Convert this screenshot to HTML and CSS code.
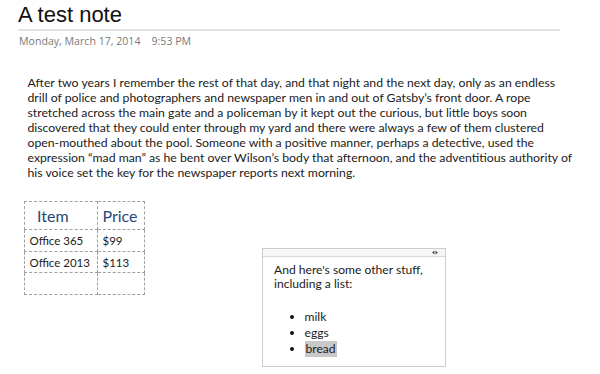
FILE: index.html
```html
<!DOCTYPE html>
<html lang="en">
<head>
<meta charset="utf-8">
<title>A test note</title>
<link rel="stylesheet" href="styles.css">
</head>
<body>
<div class="page">
  <header class="title-block">
    <h1 class="title">A test note</h1>
    <div class="meta"><span>Monday, March 17, 2014</span><span class="time">9:53 PM</span></div>
  </header>
  <p class="body-text">After two years I remember the rest of that day, and that night and the next day, only as an endless<br>drill of police and photographers and newspaper men in and out of Gatsby’s front door. A rope<br>stretched across the main gate and a policeman by it kept out the curious, but little boys soon<br>discovered that they could enter through my yard and there were always a few of them clustered<br>open-mouthed about the pool. Someone with a positive manner, perhaps a detective, used the<br>expression “mad man” as he bent over Wilson’s body that afternoon, and the adventitious authority of<br>his voice set the key for the newspaper reports next morning.</p>
  <div class="canvas-row">
    <table class="grid">
      <colgroup><col class="c1"><col class="c2"></colgroup>
      <tr class="head"><th class="th-item">Item</th><th>Price</th></tr>
      <tr class="r1"><td>Office 365</td><td>$99</td></tr>
      <tr class="r2"><td>Office 2013</td><td>$113</td></tr>
      <tr class="r3"><td></td><td></td></tr>
    </table>
    <div class="note-box">
      <div class="note-bar">
        <svg class="move" width="6" height="5" viewBox="0 0 6 5"><polygon points="0,2.5 2.5,0.5 2.5,4.5" fill="#555"/><polygon points="6,2.5 3.5,0.5 3.5,4.5" fill="#555"/></svg>
      </div>
      <div class="note-content">
        <p class="note-text">And here's some other stuff,<br>including a list:</p>
        <ul class="list">
          <li><span class="dot"></span><span>milk</span></li>
          <li><span class="dot"></span><span>eggs</span></li>
          <li><span class="dot"></span><span class="hl">bread</span></li>
        </ul>
      </div>
    </div>
  </div>
</div>
</body>
</html>
```
FILE: styles.css
```css
html, body {
  margin: 0;
  padding: 0;
  background: #ffffff;
}
body {
  font-family: Lato, "Open Sans", sans-serif;
  color: #1b1b1b;
}
.page {
  padding-left: 18px;
}
.title-block {
  width: 542px;
}
.title {
  margin: 0;
  padding-top: 1px;
  font-family: "Liberation Sans", Arial, sans-serif;
  font-weight: normal;
  font-size: 22px;
  line-height: 28px;
  color: #111;
  border-bottom: 2px solid #e2e2e2;
}
.meta {
  margin-top: 4px;
  font-family: "Open Sans", sans-serif;
  font-size: 10.6px;
  line-height: 12px;
  color: #7a7a7a;
  padding-left: 1px;
}
.time {
  margin-left: 11px;
}
.body-text {
  margin: 28px 0 0 9.5px;
  font-size: 12.25px;
  line-height: 15px;
  white-space: nowrap;
}
.canvas-row {
  display: flex;
  align-items: flex-start;
  margin-top: 21px;
}
.grid {
  margin-left: 6px;
  border-collapse: collapse;
  table-layout: fixed;
  width: 120px;
  font-size: 11.5px;
}
.grid .c1 { width: 73px; }
.grid .c2 { width: 47px; }
.grid th, .grid td {
  border: 1px dashed #a0a0a0;
  padding: 0 3px 0 4.5px;
  text-align: left;
  white-space: nowrap;
}
.grid th {
  font-weight: normal;
  font-size: 16px;
  color: #2a4778;
  padding-left: 4.5px;
}
.grid th.th-item {
  padding-left: 12px;
}
.grid .head { height: 28px; }
.grid .r1 { height: 22px; }
.grid .r2 { height: 21px; }
.grid .r3 { height: 22px; }
.note-box {
  box-sizing: border-box;
  margin-left: 117px;
  margin-top: 47px;
  width: 184px;
  height: 119px;
  border: 1px solid #cdcdcd;
}
.note-bar {
  box-sizing: border-box;
  height: 8px;
  border-bottom: 1px solid #d8d8d8;
  background: #f7f7f7;
  display: flex;
  justify-content: flex-end;
  align-items: center;
  padding-right: 7px;
}
.move {
  display: block;
}
.note-content {
  padding: 5.6px 10px 0 11px;
  font-size: 12.1px;
}
.note-text {
  margin: 0;
  line-height: 14px;
}
.list {
  list-style: none;
  margin: 18px 0 0 0;
  padding: 0;
}
.list li {
  display: flex;
  align-items: center;
  line-height: 16px;
  height: 16px;
}
.dot {
  width: 4px;
  height: 4px;
  border-radius: 50%;
  background: #111;
  margin-left: 16px;
  margin-right: 10.5px;
}
.hl {
  background: #c8c8c8;
  padding: 0 1px;
}
```
